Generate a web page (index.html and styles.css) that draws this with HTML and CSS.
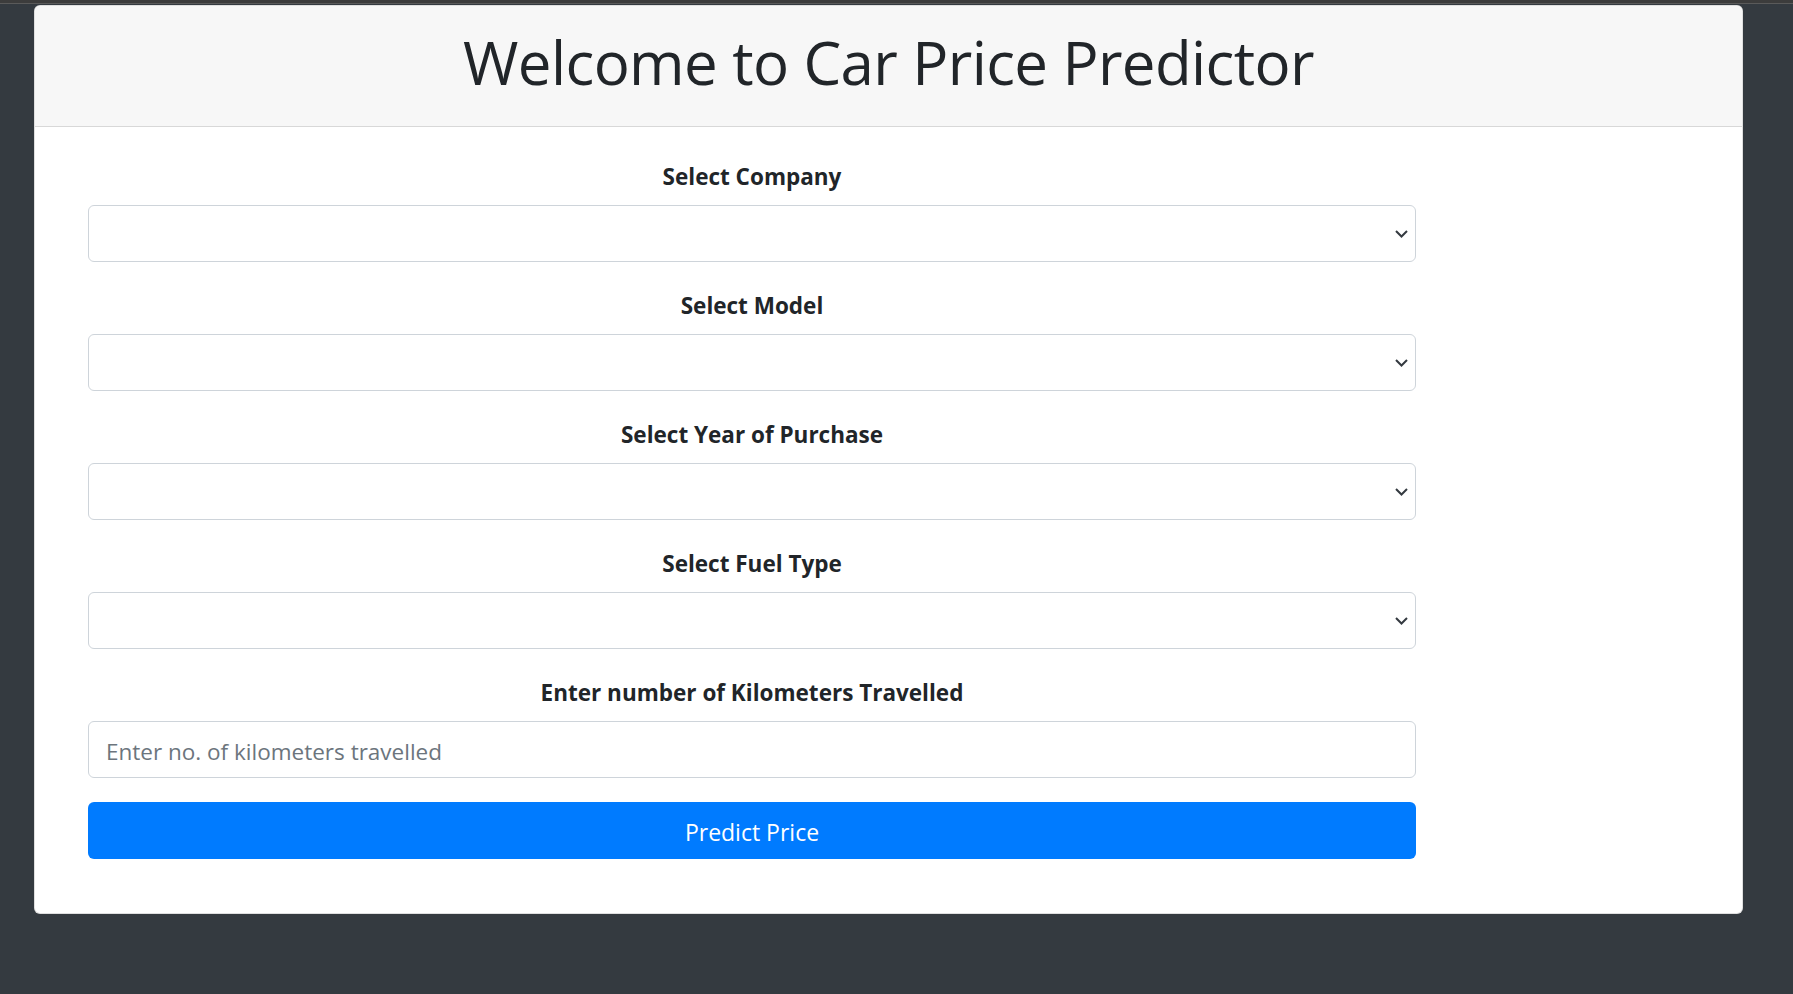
FILE: index.html
```html
<!DOCTYPE html>
<html lang="en">
<head>
<meta charset="utf-8">
<title>Car Price Predictor</title>
<link rel="stylesheet" href="styles.css">
</head>
<body>
<div class="topbar"></div>
<div class="card">
  <div class="card-header">
    <h1>Welcome to Car Price Predictor</h1>
  </div>
  <div class="card-body">
    <form class="form">
      <div class="field">
        <label for="company">Select Company</label>
        <select id="company" class="control select"></select>
      </div>
      <div class="field">
        <label for="model">Select Model</label>
        <select id="model" class="control select"></select>
      </div>
      <div class="field">
        <label for="year">Select Year of Purchase</label>
        <select id="year" class="control select"></select>
      </div>
      <div class="field">
        <label for="fuel">Select Fuel Type</label>
        <select id="fuel" class="control select"></select>
      </div>
      <div class="field">
        <label for="km">Enter number of Kilometers Travelled</label>
        <input id="km" class="control input" type="text" placeholder="Enter no. of kilometers travelled">
      </div>
      <div class="field">
        <button type="button" class="btn">Predict Price</button>
      </div>
    </form>
  </div>
</div>
</body>
</html>
```
FILE: styles.css
```css
html, body {
  margin: 0;
  padding: 0;
}
body {
  background: #343a40;
  font-family: "Segoe UI", "Open Sans", "Noto Sans", sans-serif;
  color: #212529;
  min-height: 994px;
}
.topbar {
  height: 3px;
  background: #3c3c3c;
  border-bottom: 1px solid #5a5a5a;
}
.card {
  margin: 1px 50px 0 34px;
  background: #fff;
  border: 1px solid rgba(0, 0, 0, 0.125);
  border-radius: 6px;
  overflow: hidden;
}
.card-header {
  background: #f7f7f7;
  padding: 20px 30px 18px;
  border-bottom: 1px solid rgba(0, 0, 0, 0.125);
  text-align: center;
}
.card-header h1 {
  margin: 0 0 10px;
  font-size: 60px;
  line-height: 72px;
  font-weight: 500;
  color: #212529;
  letter-spacing: -0.6px;
}
.card-body {
  padding: 30px 30px 30px 53px;
}
.form {
  width: 1328px;
}
.field {
  margin-bottom: 24px;
}
.field label {
  display: block;
  text-align: center;
  font-weight: 700;
  font-size: 22.5px;
  line-height: 36px;
  padding-top: 2px;
  margin-bottom: 10px;
  color: #212529;
}
.control {
  display: block;
  width: 100%;
  height: 57px;
  box-sizing: border-box;
  border: 1px solid #ced4da;
  border-radius: 6px;
  background-color: #fff;
  font-family: inherit;
  font-size: 22.5px;
  color: #495057;
  margin: 0;
}
.select {
  -webkit-appearance: none;
  appearance: none;
  padding: 0 40px 0 17px;
  background-image: url("data:image/svg+xml;utf8,<svg xmlns='http://www.w3.org/2000/svg' viewBox='0 0 13 8' width='13' height='8'><path d='M1 1l5.5 5.5 5.5-5.5' fill='none' stroke='%23343a40' stroke-width='2'/></svg>");
  background-repeat: no-repeat;
  background-position: right 7px center;
  background-size: 13px 8px;
}
.input {
  padding: 3px 17px 0;
  outline: none;
}
.input::placeholder {
  color: #6c757d;
  opacity: 1;
}
.btn {
  display: block;
  width: 100%;
  height: 57px;
  border: none;
  border-radius: 6px;
  background: #007bff;
  color: #fff;
  font-family: inherit;
  font-size: 23px;
  padding-top: 3px;
  cursor: pointer;
}
```
